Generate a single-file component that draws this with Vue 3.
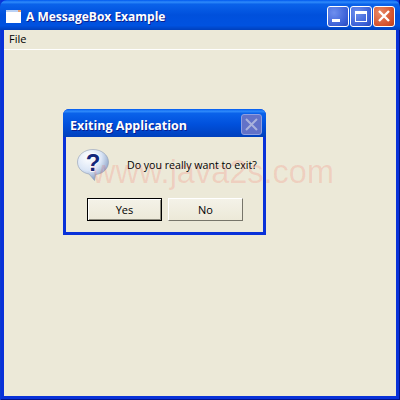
<template>
  <div class="window">
    <div class="titlebar">
      <svg class="app-icon" width="15" height="13" viewBox="0 0 15 13">
        <rect x="0" y="0" width="15" height="13" fill="#fff" />
        <rect x="0" y="0" width="15" height="2" fill="#b9d1f5" />
        <rect x="12" y="0" width="3" height="2" fill="#e8a070" />
      </svg>
      <span class="title">A MessageBox Example</span>
      <div class="controls">
        <div class="ctl ctl-blue">
          <svg width="22" height="21" viewBox="0 0 22 21"><rect x="5" y="13" width="8" height="3" fill="#fff" /></svg>
        </div>
        <div class="ctl ctl-blue">
          <svg width="22" height="21" viewBox="0 0 22 21">
            <rect x="5.500" y="5.500" width="11" height="10" fill="none" stroke="#fff" />
            <rect x="5" y="5" width="12" height="3" fill="#fff" />
          </svg>
        </div>
        <div class="ctl ctl-red">
          <svg width="22" height="21" viewBox="0 0 22 21"><path d="M6 5 16 15M16 5 6 15" stroke="#fff" stroke-width="2.4" /></svg>
        </div>
      </div>
    </div>
    <div class="client">
      <div class="menubar"><span>File</span></div>
      <div class="canvas">
        <div class="dialog">
          <div class="dlg-title">
            <span>Exiting Application</span>
            <div class="dlg-close">
              <svg width="21" height="21" viewBox="0 0 21 21"><path d="M5 5 16 16M16 5 5 16" stroke="#a9b2dc" stroke-width="2" /></svg>
            </div>
          </div>
          <div class="dlg-body">
            <div class="dlg-msg">
              <svg class="q-icon" width="32" height="32" viewBox="0 0 32 32">
                <defs>
                  <radialGradient id="bub" cx="0.35" cy="0.25" r="0.85">
                    <stop offset="0" stop-color="#ffffff" />
                    <stop offset="0.5" stop-color="#dbe6f6" />
                    <stop offset="0.85" stop-color="#8ea4c8" />
                    <stop offset="1" stop-color="#66789c" />
                  </radialGradient>
                </defs>
                <path d="M16 0.500C7.500 0.500 0.500 6 0.500 13c0 6.500 5 11 11.500 12L17.500 31.500 18.500 25.500C26 25 31.500 19.500 31.500 13 31.500 6 24.500 0.500 16 0.500Z" fill="url(#bub)" stroke="#8f9cb4" stroke-width="0.6" />
                <text x="16" y="22" class="q-mark">?</text>
              </svg>
              <span class="msg">Do you really want to exit?</span>
            </div>
            <div class="dlg-btns">
              <button class="btn btn-default">Yes</button>
              <button class="btn">No</button>
            </div>
          </div>
        </div>
      </div>
    </div>
    <div class="watermark">www.java2s.com</div>
  </div>
</template>

<script setup>
</script>

<style>
html, body {
  margin: 0;
  background: #ece9d8;
}
</style>

<style scoped>
.window {
  position: relative;
  width: 400px;
  height: 400px;
  background: #0831d9;
  box-shadow: inset 1px 0 0 #0a3ad0, inset -1px 0 0 #00138c, inset 0 -1px 0 #00138c;
  overflow: hidden;
  font-family: "DejaVu Sans", sans-serif;
  display: flex;
  flex-direction: column;
}

.titlebar {
  height: 30px;
  flex: none;
  display: flex;
  align-items: center;
  padding: 3px 5px 0 6px;
  box-sizing: border-box;
  background: linear-gradient(#0058ee 0%, #2f8bfb 7%, #0a62ea 14%, #0050dc 50%, #0052e0 85%, #0040bc 100%);
  border-radius: 7px 7px 0 0;
}

.app-icon {
  flex: none;
  margin-right: 5px;
}

.title {
  color: #fff;
  font-family: "Open Sans", sans-serif;
  font-size: 12px;
  font-weight: 700;
  text-shadow: 1px 1px 0 #0a1f8f;
  flex: 1;
}

.controls {
  display: flex;
  gap: 1px;
  margin-top: -1px;
}

.ctl {
  width: 22px;
  height: 21px;
  border: 1px solid #fff;
  border-radius: 3px;
  box-sizing: border-box;
  display: flex;
}

.ctl svg {
  flex: none;
  margin: -1px;
}

.ctl-blue {
  background: radial-gradient(circle at 30% 30%, #6e8fee, #3a5fd6 70%, #2a47b8);
}

.ctl-red {
  background: radial-gradient(circle at 30% 30%, #e88a68, #d4502a 70%, #b8401e);
}

.client {
  flex: 1;
  margin: 0 4px 4px;
  background: #ece9d8;
  display: flex;
  flex-direction: column;
}

.menubar {
  height: 20px;
  flex: none;
  box-sizing: border-box;
  border-bottom: 1px solid #fff;
  padding: 1px 0 0 5px;
  font-family: "Open Sans", sans-serif;
  font-size: 11px;
  line-height: 15px;
  color: #000;
}

.canvas {
  flex: 1;
  padding: 59px 0 0 59px;
}

.dialog {
  width: 203px;
  height: 126px;
  box-sizing: border-box;
  background: #0831d9;
  border-radius: 6px 6px 0 0;
  display: flex;
  flex-direction: column;
  padding: 0 3px 3px;
}

.dlg-title {
  height: 28px;
  flex: none;
  margin: 0 -3px;
  padding: 3px 4px 0 7px;
  box-sizing: border-box;
  display: flex;
  align-items: center;
  justify-content: space-between;
  background: linear-gradient(#0058ee 0%, #2f8bfb 8%, #0a62ea 16%, #0050dc 55%, #0040bc 100%);
  border-radius: 6px 6px 0 0;
  color: #fff;
  font-family: "Open Sans", sans-serif;
  font-size: 12.500px;
  font-weight: 700;
  text-shadow: 1px 1px 0 #0a1f8f;
}

.dlg-title span {
  position: relative;
  top: 1px;
}

.dlg-close {
  width: 21px;
  height: 21px;
  box-sizing: border-box;
  border: 1px solid #8f9fe0;
  border-radius: 3px;
  background: #6272c8;
  display: flex;
}

.dlg-close svg {
  margin: -1px;
  flex: none;
}

.dlg-body {
  flex: 1;
  background: #ece9d8;
  display: flex;
  flex-direction: column;
  padding: 0 0 0 11px;
}

.dlg-msg {
  display: flex;
  align-items: center;
  height: 61px;
  box-sizing: border-box;
  padding: 12px 0 17px;
}

.q-icon {
  flex: none;
  margin-right: 18px;
}

.q-mark {
  font-family: "Liberation Sans", sans-serif;
  font-weight: 700;
  font-size: 24px;
  fill: #13277c;
  stroke: #fff;
  stroke-width: 1.5px;
  paint-order: stroke;
  text-anchor: middle;
}

.msg {
  font-family: "Open Sans", sans-serif;
  font-size: 10.600px;
  color: #000;
  white-space: nowrap;
}

.dlg-btns {
  display: flex;
  gap: 6px;
  padding: 0 0 0 10px;
}

.btn {
  width: 75px;
  height: 23px;
  padding: 0;
  box-sizing: border-box;
  border: 1px solid;
  border-color: #fff #77756a #77756a #fff;
  background: linear-gradient(#f4f2e8, #ece9d8);
  font-family: "Open Sans", sans-serif;
  font-size: 11px;
  color: #000;
}

.btn-default {
  border: 1px solid #000;
  box-shadow: inset 1px 1px 0 #fff, inset -1px -1px 0 #8c8a7c;
}

.watermark {
  position: absolute;
  left: 92px;
  top: 151px;
  font-family: "Liberation Sans", sans-serif;
  font-size: 32.500px;
  line-height: 42px;
  color: rgba(255, 30, 20, 0.13);
  white-space: nowrap;
  pointer-events: none;
}
</style>
